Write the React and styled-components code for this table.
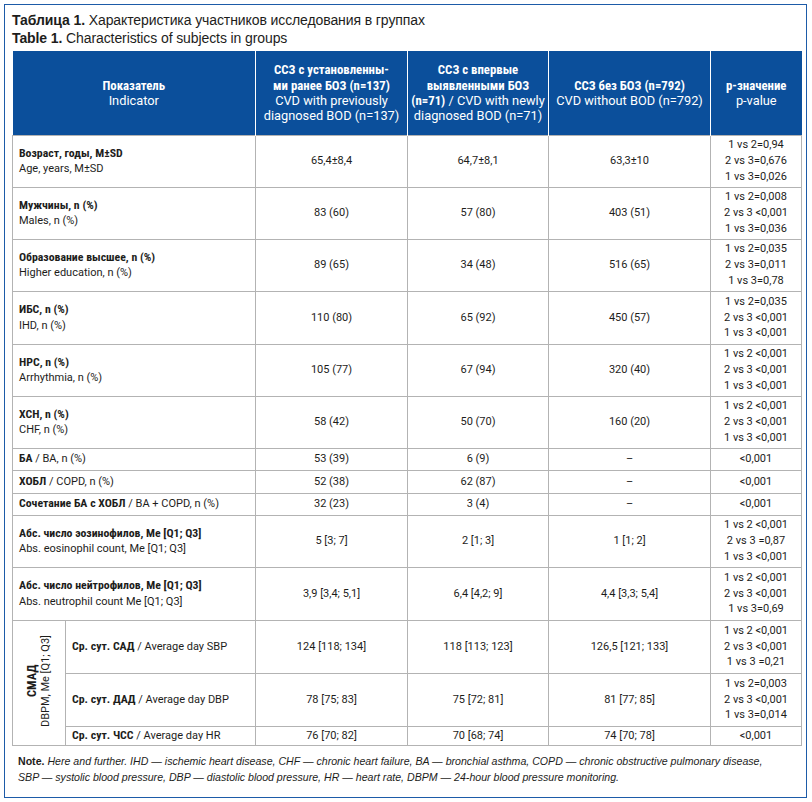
import React from "react";
import styled, { createGlobalStyle } from "styled-components";

const GlobalStyle = createGlobalStyle`
  body {
    margin: 0;
    background: #ffffff;
    font-family: "Liberation Sans", Arial, sans-serif;
    color: #1d1d1b;
  }
`;

const rows = [
  { ru: "Возраст, годы, M±SD", en: "Age, years, M±SD", v: ["65,4±8,4", "64,7±8,1", "63,3±10"], p: ["1 vs 2=0,94", "2 vs 3=0,676", "1 vs 3=0,026"], h: 52 },
  { ru: "Мужчины, n (%)", en: "Males, n (%)", v: ["83 (60)", "57 (80)", "403 (51)"], p: ["1 vs 2=0,008", "2 vs 3 <0,001", "1 vs 3=0,036"], h: 52 },
  { ru: "Образование высшее, n (%)", en: "Higher education, n (%)", v: ["89 (65)", "34 (48)", "516 (65)"], p: ["1 vs 2=0,035", "2 vs 3=0,011", "1 vs 3=0,78"], h: 52 },
  { ru: "ИБС, n (%)", en: "IHD, n (%)", v: ["110 (80)", "65 (92)", "450 (57)"], p: ["1 vs 2=0,035", "2 vs 3 <0,001", "1 vs 3 <0,001"], h: 53 },
  { ru: "НРС, n (%)", en: "Arrhythmia, n (%)", v: ["105 (77)", "67 (94)", "320 (40)"], p: ["1 vs 2 <0,001", "2 vs 3 <0,001", "1 vs 3 <0,001"], h: 52 },
  { ru: "ХСН, n (%)", en: "CHF, n (%)", v: ["58 (42)", "50 (70)", "160 (20)"], p: ["1 vs 2 <0,001", "2 vs 3 <0,001", "1 vs 3 <0,001"], h: 52 },
  { ru: "БА", en: "BA, n (%)", v: ["53 (39)", "6 (9)", "–"], p: ["<0,001"], h: 22, inline: true },
  { ru: "ХОБЛ", en: "COPD, n (%)", v: ["52 (38)", "62 (87)", "–"], p: ["<0,001"], h: 23, inline: true },
  { ru: "Сочетание БА с ХОБЛ", en: "BA + COPD, n (%)", v: ["32 (23)", "3 (4)", "–"], p: ["<0,001"], h: 22, inline: true },
  { ru: "Абс. число эозинофилов, Me [Q1; Q3]", en: "Abs. eosinophil count, Me [Q1; Q3]", v: ["5 [3; 7]", "2 [1; 3]", "1 [1; 2]"], p: ["1 vs 2 <0,001", "2 vs 3 =0,87", "1 vs 3 <0,001"], h: 52 },
  { ru: "Абс. число нейтрофилов, Me [Q1; Q3]", en: "Abs. neutrophil count Me [Q1; Q3]", v: ["3,9 [3,4; 5,1]", "6,4 [4,2; 9]", "4,4 [3,3; 5,4]"], p: ["1 vs 2 <0,001", "2 vs 3 <0,001", "1 vs 3=0,69"], h: 53 },
];

const smad = [
  { ru: "Ср. сут. САД", en: "Average day SBP", v: ["124 [118; 134]", "118 [113; 123]", "126,5 [121; 133]"], p: ["1 vs 2 <0,001", "2 vs 3 <0,001", "1 vs 3 =0,21"], h: 53 },
  { ru: "Ср. сут. ДАД", en: "Average day DBP", v: ["78 [75; 83]", "75 [72; 81]", "81 [77; 85]"], p: ["1 vs 2=0,003", "2 vs 3 <0,001", "1 vs 3=0,014"], h: 53 },
  { ru: "Ср. сут. ЧСС", en: "Average day HR", v: ["76 [70; 82]", "70 [68; 74]", "74 [70; 78]"], p: ["<0,001"], h: 19 },
];

const colWidths = [53, 190, 152, 141, 162, 91];

const PValues = ({ list }) => (
  <>
    {list.map((t, i) => (
      <PLine key={i}>{t}</PLine>
    ))}
  </>
);

const App = () => {
  return (
    <>
      <GlobalStyle />
      <Frame>
        <Caption>
          <b>Таблица 1.</b> Характеристика участников исследования в группах
        </Caption>
        <Caption>
          <b>Table 1.</b> Characteristics of subjects in groups
        </Caption>
        <Table>
          <colgroup>
            {colWidths.map((w, i) => (
              <Col key={i} $w={w} />
            ))}
          </colgroup>
          <thead>
            <HeadRow>
              <Th colSpan={2}>
                <strong>Показатель</strong>
                <br />
                Indicator
              </Th>
              <Th>
                <strong>
                  ССЗ с установленны-
                  <br />
                  ми ранее БОЗ (n=137)
                </strong>
                <br />
                CVD with previously
                <br />
                diagnosed BOD (n=137)
              </Th>
              <Th>
                <strong>
                  ССЗ с впервые
                  <br />
                  выявленными БОЗ
                </strong>
                <br />
                <strong>(n=71)</strong> / CVD with newly
                <br />
                diagnosed BOD (n=71)
              </Th>
              <Th>
                <strong>ССЗ без БОЗ (n=792)</strong>
                <br />
                CVD without BOD (n=792)
              </Th>
              <Th>
                <strong>p-значение</strong>
                <br />
                p-value
              </Th>
            </HeadRow>
          </thead>
          <tbody>
            {rows.map((r, i) => (
              <Row key={i} $h={r.h}>
                <Label colSpan={2}>
                  {r.inline ? (
                    <>
                      <b>{r.ru}</b> / {r.en}
                    </>
                  ) : (
                    <>
                      <b>{r.ru}</b>
                      <br />
                      {r.en}
                    </>
                  )}
                </Label>
                {r.v.map((v, j) => (
                  <Value key={j}>{v}</Value>
                ))}
                <Value>
                  <PValues list={r.p} />
                </Value>
              </Row>
            ))}
            {smad.map((r, i) => (
              <Row key={"s" + i} $h={r.h}>
                {i === 0 && (
                  <GroupCell rowSpan={3}>
                    <Rotated>
                      <b>СМАД</b>
                      <br />
                      DBPM, Me [Q1; Q3]
                    </Rotated>
                  </GroupCell>
                )}
                <Label>
                  <b>{r.ru}</b> / {r.en}
                </Label>
                {r.v.map((v, j) => (
                  <Value key={j}>{v}</Value>
                ))}
                <Value>
                  <PValues list={r.p} />
                </Value>
              </Row>
            ))}
          </tbody>
        </Table>
        <Note>
          <b>Note.</b>{" "}
          <i>
            Here and further. IHD — ischemic heart disease, CHF — chronic heart failure, BA — bronchial asthma, COPD —
            chronic obstructive pulmonary disease,
            <br />
            SBP — systolic blood pressure, DBP — diastolic blood pressure, HR — heart rate, DBPM — 24-hour blood pressure
            monitoring.
          </i>
        </Note>
      </Frame>
    </>
  );
};

const Frame = styled.div`
  box-sizing: border-box;
  width: 803px;
  height: 794px;
  margin: 4px;
  border: 1.5px solid #1d5ba8;
  padding: 6px 5px 0 7px;
`;

const Caption = styled.div`
  font-size: 14px;
  line-height: 18px;
  color: #1d1d1b;
  letter-spacing: -0.1px;

  b {
    font-weight: 700;
  }
`;

const Table = styled.table`
  width: 789px;
  margin-top: 4px;
  border-collapse: collapse;
  table-layout: fixed;
  font-family: Roboto, "Liberation Sans", sans-serif;
  font-stretch: 92%;
  font-size: 11px;
  color: #1d1d1b;

  b,
  strong {
    font-weight: 700;
    font-stretch: 75%;
  }
`;

const Col = styled.col`
  width: ${(p) => p.$w}px;
`;

const HeadRow = styled.tr`
  height: 84px;
  background: #0b4f9b;
`;

const Th = styled.th`
  color: #ffffff;
  font-weight: 400;
  font-size: 12.8px;
  font-stretch: 90%;
  line-height: 15.2px;
  text-align: center;
  vertical-align: middle;
  white-space: nowrap;
  padding: 0 2px;
  border-left: 1px solid #ffffff;

  &:first-child {
    border-left: none;
  }
`;

const Row = styled.tr`
  height: ${(p) => p.$h}px;
`;

const Label = styled.td`
  border: 1px solid #b3b3b3;
  padding: 0 6px;
  line-height: 15.5px;
  vertical-align: middle;
  text-align: left;
  white-space: nowrap;

  b {
    font-size: 11.8px;
  }
`;

const Value = styled.td`
  border: 1px solid #b3b3b3;
  padding: 0 4px;
  line-height: 15.7px;
  text-align: center;
  vertical-align: middle;
`;

const PLine = styled.div`
  white-space: nowrap;
`;

const GroupCell = styled.td`
  border: 1px solid #b3b3b3;
  padding: 0;
  text-align: center;
  vertical-align: middle;
`;

const Rotated = styled.div`
  display: inline-block;
  writing-mode: vertical-rl;
  transform: rotate(180deg);
  line-height: 14px;
  text-align: center;
  font-size: 11px;

  b {
    font-size: 12.5px;
  }
`;

const Note = styled.div`
  padding: 7px 0 0 6px;
  font-size: 10.6px;
  line-height: 16px;
  color: #1d1d1b;

  b {
    font-weight: 700;
  }
`;

export default App;
